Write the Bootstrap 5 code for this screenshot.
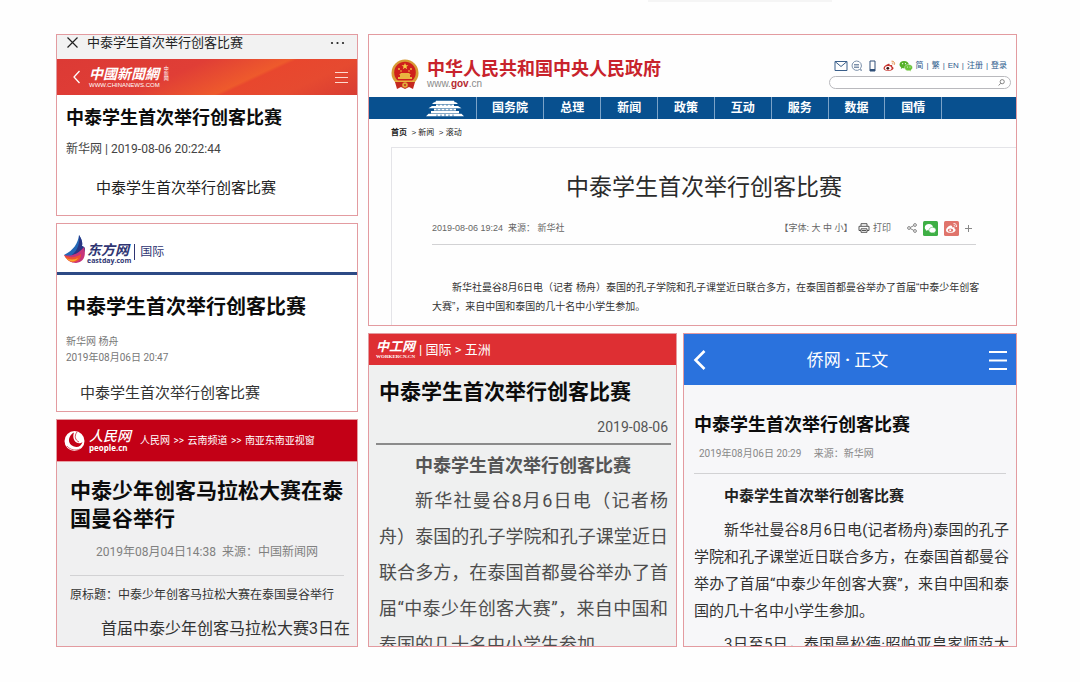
<!DOCTYPE html>
<html lang="zh-CN">
<head>
<meta charset="utf-8">
<meta name="viewport" content="width=device-width, initial-scale=1">
<title>中泰学生首次举行创客比赛</title>
<link href="https://cdn.jsdelivr.net/npm/bootstrap@5.3.0/dist/css/bootstrap.min.css" rel="stylesheet">
<style>
  body { background: #fefefe; color: #222; font-family: Roboto, "Noto Sans CJK SC", sans-serif; font-size: 15px; line-height: 24px; }
  h1, h2, h3, p { margin: 0; }
  a { color: inherit; text-decoration: none; }
  svg { display: block; flex: none; }
  .plain { border: 0; background: none; padding: 0; color: inherit; }
  .top-edge { height: 2px; width: 17%; margin-left: 60%; background: #f5f5f5; }

  .board { display: grid; grid-template-columns: 302fr 649fr; gap: 10px; padding: 32px 63px 34px 56px; }
  .stack { display: flex; flex-direction: column; gap: 7px; min-width: 0; }
  .pair { display: grid; grid-template-columns: 309fr 334fr; gap: 6px; flex: 1; }
  .clip { border: 1px solid #e39ba0; overflow: hidden; background: #fff; min-width: 0; }
  .t18, .t20, .t21 { font-weight: 700; color: #0c0c0c; white-space: nowrap; }
  .t18 { font-size: 18px; line-height: 28px; }
  .t20 { font-size: 20px; line-height: 30px; }
  .t21 { font-size: 21px; line-height: 28px; }
  .rule { margin: 0; border: 0; opacity: 1; height: 1px; background: #d2d2d4; }

  /* chinanews */
  .cn-status { height: 24px; background: #f2f2f2; font-size: 13px; line-height: 15px; padding: 0 12px 9px 9px; color: #222; }
  .cn-banner { height: 36px; padding: 0 9px 0 15px; color: #fff; background: linear-gradient(155deg, #dc3a35 0%, #e03e36 40%, #ee5a2c 62%, #e8472e 64%, #e64a30 80%, #d83c33 100%); }
  .cn-logo { font-size: 14px; line-height: 16px; font-weight: 700; font-style: italic; }
  .cn-url { font: 6px/7px "Liberation Sans", sans-serif; }
  .cn-seal { font-size: 5px; line-height: 5px; width: 5px; }
  .cn-body { padding: 9px 9px 15px; }
  .cn-meta { font-size: 12px; line-height: 20px; margin-top: 7px; color: #444; }
  .cn-text { margin: 17px 0 0 30px; }

  /* eastday */
  .ed-head { height: 51px; padding: 4px 6px 0; border-bottom: 3px solid #2d4a85; color: #2f3573; }
  .ed-name { font-size: 14px; line-height: 14px; font-weight: 700; font-style: italic; }
  .ed-url { font: 700 7px/8px "Open Sans", sans-serif; }
  .ed-chan { font-size: 12px; line-height: 16px; border-left: 1px solid #2f3573; padding-left: 5px; margin-left: 3px; }
  .ed-body { padding: 17px 9px 6px; }
  .ed-meta { font-size: 10px; line-height: 16px; margin-top: 12px; color: #777; }
  .ed-text { margin: 15px 0 0 14px; color: #333; }

  /* people.cn */
  .pp-card { background: #f0f0f1; }
  .pp-head { height: 42px; background: #c30016; color: #fff; padding: 0 7px; border-bottom: 1px solid #e8a0a4; }
  .pp-name { font-size: 14px; line-height: 15px; font-style: italic; font-weight: 500; }
  .pp-url { font: 700 8px/8px "Open Sans", sans-serif; }
  .pp-path { font-size: 10px; line-height: 16px; margin-left: 9px; white-space: nowrap; }
  .pp-path span { margin: 0 1px; }
  .pp-body { padding: 15px 13px 5px; }
  .pp-meta { font-size: 12px; line-height: 20px; margin: 9px 0 13px; color: #808080; white-space: pre; text-align: center; }
  .pp-orig { font-size: 12px; line-height: 20px; margin-top: 9px; white-space: nowrap; color: #333; }
  .pp-text { font-size: 16px; margin: 12px 0 0 31px; white-space: nowrap; color: #333; }

  /* gov.cn */
  .gv-card { font-family: "Liberation Sans", "Noto Sans CJK SC", sans-serif; background: #fefefe; }
  .gv-head { height: 62px; padding: 0 5px 0 22px; }
  .gv-name { font-size: 18px; line-height: 20px; font-weight: 700; color: #c8232c; white-space: nowrap; }
  .gv-url { font-size: 10px; line-height: 10px; color: #8a8a8a; }
  .gv-url b { color: #b52a30; }
  .gv-tools { font-size: 8px; line-height: 12px; color: #2c5a8c; gap: 3px; }
  .gv-search { width: 182px; height: 13px; border: 1px solid #b9b9bd; border-radius: 7px; background: #fff; padding: 0 5px; }
  .gv-search input { border: 0; outline: 0; background: none; font-size: 8px; height: 10px; min-width: 0; padding: 0; }
  .gv-nav { display: grid; grid-template-columns: 108fr 68fr repeat(7, 57fr) 74fr; background: #08508f; color: #fff; height: 22px; font-size: 12px; font-weight: 700; line-height: 22px; }
  .gv-nav a { text-align: center; border-right: 1px solid #7ba3c8; white-space: nowrap; }
  .gv-nav .gv-home { display: flex; justify-content: end; align-items: center; padding-right: 12px; }
  .gv-path { height: 28px; padding-left: 22px; font-size: 8px; line-height: 27px; color: #222; }
  .gv-page { margin-left: 22px; border: solid #e4e4e8; border-width: 1px 0 0 1px; padding: 22px 40px 9px; }
  .gv-title { font-size: 23px; line-height: 34px; text-align: center; font-weight: 400; color: #2b2b2b; }
  .gv-meta { font-size: 9px; line-height: 20px; height: 20px; margin: 14px 0 6px; color: #666; white-space: pre-wrap; }
  .gv-share { gap: 6px; white-space: normal; }
  .gv-share .gv-print { margin-right: 10px; }
  .gv-text { font-size: 10px; line-height: 19px; margin-top: 33px; white-space: nowrap; color: #333; }

  /* workercn */
  .wk-card { background: #eff0f0; }
  .wk-head { height: 31px; background: #de2f33; color: #fff; padding: 0 7px; font-size: 13px; }
  .wk-name { font-size: 13px; line-height: 14px; font-weight: 700; font-style: italic; }
  .wk-url { font: 700 5px/6px "Liberation Serif", serif; }
  .wk-body { padding: 13px 8px 0 10px; }
  .wk-date { font-size: 14px; line-height: 20px; text-align: right; margin-top: 11px; color: #555; }
  .wk-rule { height: 2px; background: #8b8b8b; margin: 6px -3px 0; }
  .wk-sub { font-size: 18px; line-height: 26px; font-weight: 700; color: #555; margin: 8px 0 0 36px; white-space: nowrap; }
  .wk-text { font-size: 18px; line-height: 36px; height: 163px; margin-top: 4px; text-indent: 36px; text-align: justify; color: #4d4d4d; overflow: hidden; }

  /* qiaowang */
  .qw-card { background: #f7f7f9; }
  .qw-head { height: 51px; background: #2a72dd; color: #fff; font-size: 17px; padding: 0 9px; }
  .qw-body { padding: 26px 7px 0 10px; }
  .qw-meta { font-size: 10px; line-height: 16px; margin: 7px 0 0 5px; color: #888; }
  .qw-rule { margin: 11px 3px 0 0; }
  .qw-sub { font-size: 15px; line-height: 24px; font-weight: 700; margin: 10px 0 0 30px; color: #222; }
  .qw-text { height: 129px; margin-top: 9px; overflow: hidden; line-height: 27px; color: #333; }
  .qw-text p { text-indent: 30px; text-align: justify; margin-bottom: 6px; }
</style>
</head>
<body>
<div class="top-edge"></div>
<main class="board">
  <div class="stack">

    <article class="clip">
      <div class="cn-status d-flex align-items-center justify-content-between">
        <div class="d-flex align-items-center gap-2">
          <button class="plain" aria-label="关闭"><svg width="13" height="13" viewBox="0 0 13 13" stroke="#222" stroke-width="1.2"><path d="M1.500 1.500l10 10M11.500 1.500l-10 10"/></svg></button>
          <span>中泰学生首次举行创客比赛</span>
        </div>
        <button class="plain" aria-label="更多"><svg width="15" height="4" viewBox="0 0 15 4" fill="#222"><circle cx="2" cy="2" r="1.100"/><circle cx="7.500" cy="2" r="1.100"/><circle cx="13" cy="2" r="1.100"/></svg></button>
      </div>
      <div class="cn-banner d-flex align-items-center justify-content-between">
        <div class="d-flex align-items-center gap-2">
          <button class="plain" aria-label="返回"><svg width="9" height="14" viewBox="0 0 9 14" fill="none" stroke="#fff" stroke-width="1.300"><path d="M7.500 1L2 7l5.500 6"/></svg></button>
          <a href="#" class="d-flex gap-1">
            <span class="d-flex flex-column"><span class="cn-logo">中國新聞網</span><span class="cn-url">WWW.CHINANEWS.COM</span></span>
            <span class="cn-seal">中新网</span>
          </a>
        </div>
        <button class="plain" aria-label="菜单"><svg width="13" height="13" viewBox="0 0 13 13" stroke="#ffd9cf" stroke-width="1.200"><path d="M0 1.500h13M0 6.500h13M0 11.500h13"/></svg></button>
      </div>
      <div class="cn-body">
        <h2 class="t18">中泰学生首次举行创客比赛</h2>
        <p class="cn-meta">新华网 | 2019-08-06 20:22:44</p>
        <p class="cn-text">中泰学生首次举行创客比赛</p>
      </div>
    </article>

    <article class="clip">
      <div class="ed-head d-flex align-items-center">
        <svg width="24" height="32" viewBox="0 0 24 32">
          <path d="M16 1c-1 8-5 15-15 20 3 3 10 4 15 2 5-2 7-7 5-10l-2-1c1-4-1-8-3-11z" fill="#2467b5"/>
          <path d="M16 1c1 8-1 15-7 20l8 1c5-3 6-7 4-9l-2-1c1-4-1-8-3-11z" fill="#293583"/>
          <path d="M1 21c7 2 14-1 20-8 2 7 1 15-8 16-5 0-9-3-12-8z" fill="#c7347a"/>
          <path d="M1 21c5 3 12 3 17-1 0 5-3 8-7 8-4 1-8-3-10-7z" fill="#ee5131"/>
          <path d="M3 24c4 2 8 2 12 0-2 4-8 5-12 0z" fill="#f9a62b"/>
        </svg>
        <a href="#" class="d-flex flex-column mt-2"><span class="ed-name">东方网</span><span class="ed-url">eastday.com</span></a>
        <a href="#" class="ed-chan mt-1">国际</a>
      </div>
      <div class="ed-body">
        <h2 class="t20">中泰学生首次举行创客比赛</h2>
        <p class="ed-meta">新华网 杨舟<br>2019年08月06日 20:47</p>
        <p class="ed-text">中泰学生首次举行创客比赛</p>
      </div>
    </article>

    <article class="clip pp-card">
      <div class="pp-head d-flex align-items-center">
        <svg width="21" height="22" viewBox="0 0 21 22">
          <circle cx="10.500" cy="11" r="10" fill="#fff"/>
          <path d="M10 2.500c-1.500 4-.5 8 2.500 10 2 1.300 4.500 1 6-.5-1 4-5 6-8.500 4.500C5.500 15 4 11 5.500 7.500 6.500 5 8 3.500 10 2.500z" fill="#c30016"/>
          <path d="M13 2c-3 4-2 8 2 10" fill="none" stroke="#c30016" stroke-width=".7"/>
          <path d="M3 16c3 4 9 5 13 3" fill="none" stroke="#c30016" stroke-width=".6"/>
        </svg>
        <a href="#" class="d-flex flex-column ms-1"><span class="pp-name">人民网</span><span class="pp-url">people.cn</span></a>
        <nav class="pp-path"><a href="#">人民网</a> <span>&gt;&gt;</span> <a href="#">云南频道</a> <span>&gt;&gt;</span> <a href="#">南亚东南亚视窗</a></nav>
      </div>
      <div class="pp-body">
        <h2 class="t21">中泰少年创客马拉松大赛在泰<br>国曼谷举行</h2>
        <p class="pp-meta">2019年08月04日14:38  来源：中国新闻网</p>
        <hr class="rule">
        <p class="pp-orig">原标题：中泰少年创客马拉松大赛在泰国曼谷举行</p>
        <p class="pp-text">首届中泰少年创客马拉松大赛3日在</p>
      </div>
    </article>
  </div>

  <div class="stack">
    <article class="clip gv-card">
      <header class="gv-head d-flex justify-content-between">
        <a href="#" class="d-flex align-items-center gap-2 pt-3">
          <svg width="28" height="31" viewBox="0 0 28 31">
            <circle cx="14" cy="14" r="13.500" fill="#d89a35"/>
            <path d="M4 23h20l-2 7-4-2-4 2-4-2-4 2z" fill="#c4281f"/>
            <circle cx="14" cy="13.500" r="10.800" fill="#cf1f1c"/>
            <path d="M7 20h14v-2h-2v-2h1l-2-2h-8l-2 2h1v2H7zM4.500 21.500h19v1.500h-19z" fill="#e9b440"/>
            <path d="M14 4l1 2.300h2.400l-2 1.500.8 2.400-2.200-1.500-2.200 1.500.8-2.400-2-1.500H13z" fill="#f5ca45"/>
            <g fill="#f5ca45"><circle cx="8" cy="10" r=".9"/><circle cx="10" cy="12" r=".8"/><circle cx="18" cy="12" r=".8"/><circle cx="20" cy="10" r=".9"/></g>
            <circle cx="14" cy="26" r="2.800" fill="#e2a93c"/><circle cx="14" cy="26" r="1" fill="#c4281f"/>
          </svg>
          <span class="d-flex flex-column"><span class="gv-name">中华人民共和国中央人民政府</span><span class="gv-url">www.<b>gov</b>.cn</span></span>
        </a>
        <div class="d-flex flex-column align-items-end justify-content-end gap-1 pb-2">
          <div class="gv-tools d-flex align-items-center pe-1">
            <a href="#" aria-label="邮箱"><svg width="14" height="12" viewBox="0 0 14 12" fill="none" stroke="#3a5f8a"><path d="M1 1.500h12v9H1zM1 1.500l6 5 6-5"/></svg></a>
            <a href="#" aria-label="问答"><svg width="11" height="12" viewBox="0 0 11 12" fill="none" stroke="#5b7595" stroke-width=".8"><path d="M5.500 1a4.700 4.700 0 1 0 3 8.500l2 1-1-2A4.700 4.700 0 0 0 5.500 1zM3 4.500h5M3 6h5M3 7.500h5"/></svg></a>
            <a href="#" aria-label="手机" class="ms-1"><svg width="7" height="12" viewBox="0 0 7 12"><path d="M1 1h5v10H1z" fill="none" stroke="#2f4f78"/><path d="M1 9h5v2H1z" fill="#2f4f78"/></svg></a>
            <a href="#" aria-label="微博" class="ms-1"><svg width="13" height="12" viewBox="0 0 13 12"><path d="M5 4C2 5 .5 7 .5 8.500c0 3 9 3.500 10 0 .3-1-.5-1.500-1.300-1.800.5-1.700-1-2-2.500-1.300C6.800 4 6.500 3.500 5 4z" fill="#c6312b"/><ellipse cx="5.200" cy="8.200" rx="3.300" ry="2.100" fill="#fff"/><circle cx="4.800" cy="8.300" r="1.400" fill="#3a1412"/><path d="M8.500 1.200c2-.4 3.700 1.500 3 3.500M8.800 3c1-.1 1.500.6 1.200 1.500" fill="none" stroke="#e0823b" stroke-width=".9"/></svg></a>
            <a href="#" aria-label="微信"><svg width="14" height="12" viewBox="0 0 14 12"><path d="M5 1C2.300 1 .5 2.600.5 4.600c0 1.200.7 2.200 1.700 2.900L1.800 9l1.700-.9c4 .8 6.300-1.200 6.300-3.500C9.800 2.600 7.800 1 5 1z" fill="#55b028"/><path d="M9.600 4.500c-2.300 0-4 1.400-4 3.200 0 2 2.300 3.600 5 3l1.500.8-.3-1.300c1-.7 1.700-1.500 1.700-2.600 0-1.800-1.700-3.100-3.900-3.100z" fill="#69c336" stroke="#fff" stroke-width=".4"/><g fill="#fff"><circle cx="3.600" cy="3.700" r=".6"/><circle cx="6.500" cy="3.700" r=".6"/><circle cx="8.400" cy="7" r=".5"/><circle cx="11" cy="7" r=".5"/></g></svg></a>
            <a href="#">简</a><span>|</span><a href="#">繁</a><span>|</span><a href="#">EN</a><span>|</span><a href="#">注册</a><span>|</span><a href="#">登录</a>
          </div>
          <form class="gv-search d-flex align-items-center" role="search">
            <input type="search" class="flex-fill" aria-label="搜索">
            <button class="plain" type="button" aria-label="搜索"><svg width="7" height="7" viewBox="0 0 7 7" fill="none" stroke="#777" stroke-width=".9"><circle cx="4.200" cy="2.700" r="2.100"/><path d="M2.700 4.300L.7 6.500"/></svg></button>
          </form>
        </div>
      </header>
      <nav class="gv-nav">
        <a href="#" class="gv-home" aria-label="首页">
          <svg width="38" height="17" viewBox="0 0 38 17" fill="#fff"><path d="M10 .8h18l.8 1.700H9.200zM8 2.200h22L32 4H6zM10 4.500h18V6H10zM6 6h26l3.500 2.300h-33zM8 8.800h22v1.700H8zM5 11h28v2.200H5zM2.500 13.700h33L38 16.300H0z"/><path d="M13 4.500v1.300M17 4.500v1.300M21 4.500v1.300M25 4.500v1.300M11 8.800v1.500M15 8.800v1.500M19 8.800v1.500M23 8.800v1.500M27 8.800v1.500M11 14.500v2M15 14.500v2M19 14v2.500M23 14.500v2M27 14.500v2" stroke="#08508f" stroke-width=".8"/></svg>
        </a>
        <a href="#">国务院</a><a href="#">总理</a><a href="#">新闻</a><a href="#">政策</a><a href="#">互动</a><a href="#">服务</a><a href="#">数据</a><a href="#">国情</a>
      </nav>
      <nav class="gv-path"><a href="#" class="fw-bold">首页</a> &nbsp;&gt;&nbsp;<a href="#">新闻</a> &nbsp;&gt;&nbsp;<a href="#">滚动</a></nav>
      <div class="gv-page">
        <h1 class="gv-title">中泰学生首次举行创客比赛</h1>
        <div class="gv-meta d-flex justify-content-between"><span>2019-08-06 19:24  来源： 新华社</span><div class="gv-share d-flex align-items-center">
            <span>【字体: <a href="#">大</a> <a href="#">中</a> <a href="#">小</a>】</span>
            <a href="#" class="gv-print d-flex align-items-center"><svg width="12" height="10" viewBox="0 0 12 10" fill="none" stroke="#555"><path d="M3 3V.7h6V3M3 7.500H1V3.300h10v4.200H9M3 5.800h6v3.500H3zM4 7.500h4"/></svg>&nbsp;打印</a>
            <a href="#" aria-label="分享"><svg width="10" height="10" viewBox="0 0 10 10" fill="none" stroke="#777" stroke-width=".9"><circle cx="2" cy="5" r="1.400"/><circle cx="8" cy="2" r="1.400"/><circle cx="8" cy="8" r="1.400"/><path d="M3.300 4.400l3.400-1.700M3.300 5.600l3.400 1.700"/></svg></a>
            <a href="#" aria-label="微信"><svg width="15" height="15" viewBox="0 0 15 15"><rect width="15" height="15" rx="1.500" fill="#3eaf45"/><path d="M6 3C3.500 3 1.800 4.500 1.800 6.400c0 1 .5 1.900 1.400 2.500L2.800 10l1.500-.7C7.800 9.900 10 8.300 10 6.300 10 4.500 8.300 3 6 3z" fill="#fff"/><path d="M9.500 6.300c-2 0-3.600 1.200-3.600 2.900 0 1.800 2 3.200 4.500 2.600l1.400.7-.3-1.200c1-.6 1.500-1.300 1.500-2.200 0-1.600-1.500-2.800-3.500-2.800z" fill="#fff" stroke="#3eaf45" stroke-width=".5"/></svg></a>
            <a href="#" aria-label="微博"><svg width="15" height="15" viewBox="0 0 15 15"><rect width="15" height="15" rx="1.500" fill="#e0746b"/><path d="M6.200 4.500C4 5.300 2 7.500 2 9.200c0 3.400 8.500 3.400 9.500.2.300-1-.4-1.500-1-1.700.4-1.500-.8-1.700-2.300-1.200.2-1.300-.3-2.400-2-2z" fill="#fff"/><ellipse cx="6.500" cy="9.200" rx="2.800" ry="1.700" fill="#e0746b"/><circle cx="6.200" cy="9.300" r="1" fill="#fff"/><path d="M9.500 2.500c2-.3 3.600 1.500 3 3.500M9.700 4.200c1-.1 1.500.6 1.300 1.500" fill="none" stroke="#fff" stroke-width=".9"/></svg></a>
            <a href="#" aria-label="更多分享" class="pe-1"><svg width="7" height="7" viewBox="0 0 7 7" stroke="#888"><path d="M3.500 0v7M0 3.500h7"/></svg></a>
          </div></div>
        <hr class="rule">
        <p class="gv-text">&emsp;&emsp;新华社曼谷8月6日电（记者 杨舟）泰国的孔子学院和孔子课堂近日联合多方，在泰国首都曼谷举办了首届“中泰少年创客<br>大赛”，来自中国和泰国的几十名中小学生参加。</p>
      </div>
    </article>

    <div class="pair">
      <article class="clip wk-card">
        <div class="wk-head d-flex align-items-center gap-1">
          <a href="#" class="d-flex flex-column"><span class="wk-name">中工网</span><span class="wk-url">WORKERCN.CN</span></a>
          <nav>| <a href="#">国际</a> &gt; <a href="#">五洲</a></nav>
        </div>
        <div class="wk-body">
          <h2 class="t21">中泰学生首次举行创客比赛</h2>
          <p class="wk-date">2019-08-06</p>
          <hr class="rule wk-rule">
          <h3 class="wk-sub">中泰学生首次举行创客比赛</h3>
          <p class="wk-text">新华社曼谷8月6日电（记者杨舟）泰国的孔子学院和孔子课堂近日联合多方，在泰国首都曼谷举办了首届“中泰少年创客大赛”，来自中国和泰国的几十名中小学生参加。</p>
        </div>
      </article>

      <article class="clip qw-card">
        <div class="qw-head d-flex align-items-center justify-content-between">
          <button class="plain" aria-label="返回"><svg width="13" height="22" viewBox="0 0 13 22" fill="none" stroke="#fff" stroke-width="2.600"><path d="M11.500 2L2.500 11l9 9"/></svg></button>
          <span>侨网 <b>·</b> 正文</span>
          <button class="plain" aria-label="菜单"><svg width="18" height="20" viewBox="0 0 18 20" stroke="#fff" stroke-width="2"><path d="M0 2h18M0 10.500h18M0 19h18"/></svg></button>
        </div>
        <div class="qw-body">
          <h2 class="t18">中泰学生首次举行创客比赛</h2>
          <p class="qw-meta">2019年08月06日 20:29 &nbsp;&nbsp;&nbsp; 来源：新华网</p>
          <hr class="rule qw-rule">
          <h3 class="qw-sub">中泰学生首次举行创客比赛</h3>
          <div class="qw-text">
            <p>新华社曼谷8月6日电(记者杨舟)泰国的孔子学院和孔子课堂近日联合多方，在泰国首都曼谷举办了首届“中泰少年创客大赛”，来自中国和泰国的几十名中小学生参加。</p>
            <p>3日至5日，泰国曼松德·昭帕亚皇家师范大学</p>
          </div>
        </div>
      </article>
    </div>
  </div>
</main>
<script src="https://cdn.jsdelivr.net/npm/bootstrap@5.3.0/dist/js/bootstrap.bundle.min.js"></script>
</body>
</html>
